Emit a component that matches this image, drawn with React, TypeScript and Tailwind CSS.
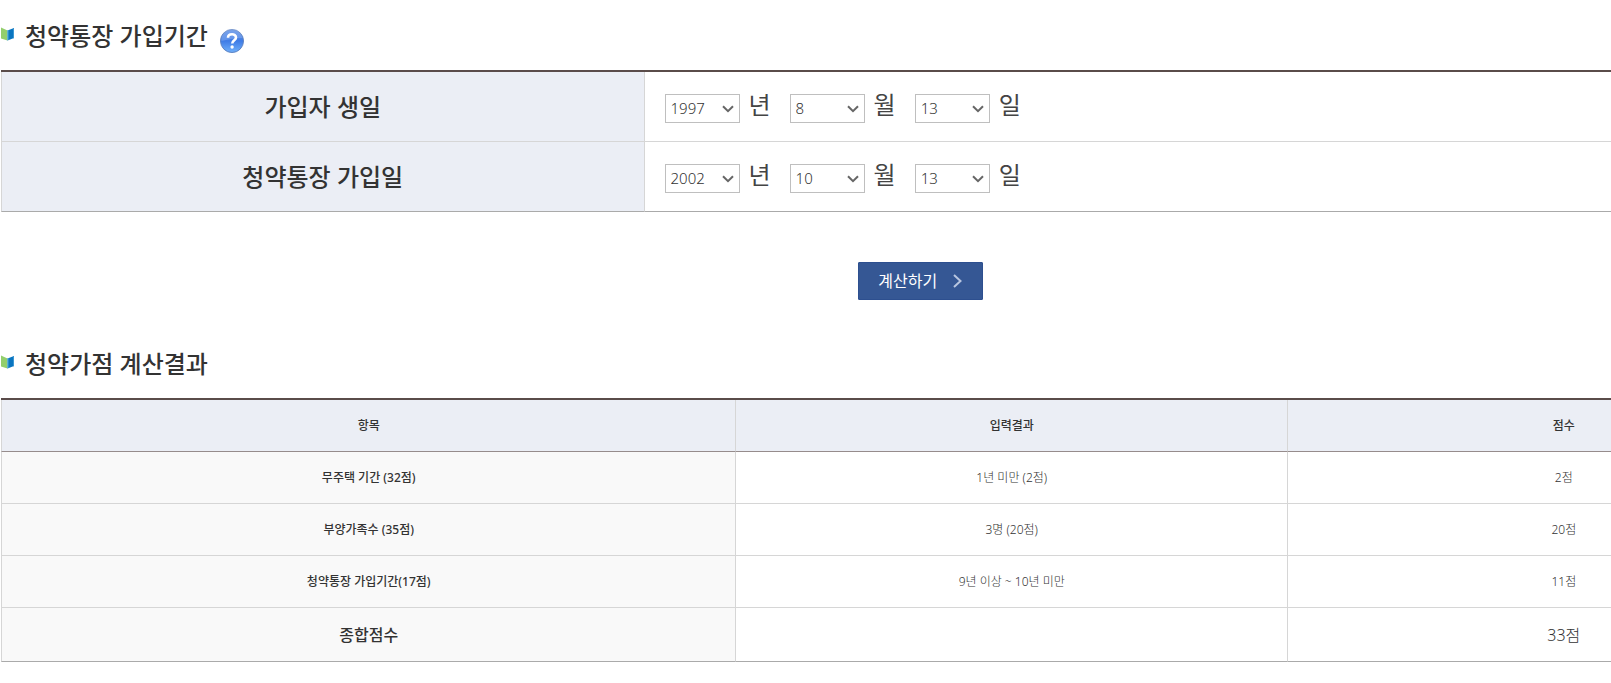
import * as React from "react";

type DateValue = { year: string; month: string; day: string };

const years = Array.from({ length: 75 }, (_, i) => String(1950 + i));
const months = Array.from({ length: 12 }, (_, i) => String(i + 1));
const days = Array.from({ length: 31 }, (_, i) => String(i + 1));

const results = [
  { item: "무주택 기간 (32점)", input: "1년 미만 (2점)", score: "2점" },
  { item: "부양가족수 (35점)", input: "3명 (20점)", score: "20점" },
  { item: "청약통장 가입기간(17점)", input: "9년 이상 ~ 10년 미만", score: "11점" },
];

function BookIcon() {
  return (
    <svg width="13" height="14" viewBox="0 0 13 14" className="mb-1 shrink-0" aria-hidden="true">
      <path d="M0 0.5 L6.5 3.5 V13.5 L0 11.5 Z" fill="#93ce6c" />
      <path d="M6.5 3.5 L13 1 V11 L6.5 13.5 Z" fill="#0a75c0" />
      <path d="M6.2 3.6 L7.4 3.1 V13 L6.2 13.5 Z" fill="#5fb4d8" />
      <path d="M12 1.4 L13 1 V11 L12 11.4 Z" fill="#3c97d2" />
    </svg>
  );
}

function HelpIcon() {
  return (
    <svg width="24" height="24" viewBox="0 0 24 24" aria-hidden="true">
      <defs>
        <linearGradient id="help-bg" x1="0" y1="0" x2="0" y2="1">
          <stop offset="0" stopColor="#5b8ee6" />
          <stop offset="0.5" stopColor="#3f7ce6" />
          <stop offset="1" stopColor="#6fb0fb" />
        </linearGradient>
      </defs>
      <circle cx="12" cy="12" r="11.5" fill="url(#help-bg)" stroke="#5f83c2" />
      <path d="M1.5 12 A10.5 10.5 0 0 1 22.5 9 Q13 9 1.5 12 Z" fill="#fff" opacity="0.18" />
      <path
        d="M8 8.8 C8 4.2 16 4.2 16 8.6 C16 11.4 12.2 11.2 12.2 14.6"
        fill="none"
        stroke="#fff"
        strokeWidth="2.6"
      />
      <circle cx="12.1" cy="18" r="1.7" fill="#fff" />
    </svg>
  );
}

function SectionTitle({ children, help }: { children: React.ReactNode; help?: boolean }) {
  return (
    <div className="flex items-center">
      <BookIcon />
      <h2 className="ml-[11px] text-2xl leading-9 font-medium text-[#333]">{children}</h2>
      {help && (
        <button type="button" aria-label="도움말" className="mt-[10px] ml-3 cursor-pointer">
          <HelpIcon />
        </button>
      )}
    </div>
  );
}

function DateSelect({
  label,
  unit,
  value,
  options,
  onChange,
}: {
  label: string;
  unit: string;
  value: string;
  options: string[];
  onChange: (v: string) => void;
}) {
  return (
    <div className="flex items-center gap-[9px]">
      <div className="relative mt-1">
        <select
          aria-label={label + " " + unit}
          value={value}
          onChange={(e) => onChange(e.target.value)}
          className="block h-[29px] w-[75px] appearance-none border border-[#bfbfbf] bg-white pl-[5px] text-[15px] font-light text-[#333]"
        >
          {options.map((o) => (
            <option key={o} value={o}>
              {o}
            </option>
          ))}
        </select>
        <svg
          width="12"
          height="8"
          viewBox="0 0 12 8"
          className="pointer-events-none absolute top-[11px] right-[6px]"
          aria-hidden="true"
        >
          <path d="M1 1.2 L6 6.2 L11 1.2" fill="none" stroke="#666" strokeWidth="2" />
        </svg>
      </div>
      <span className="pb-1 text-2xl leading-8 font-normal text-[#444]">{unit}</span>
    </div>
  );
}

function DateRow({
  label,
  value,
  onChange,
  last,
}: {
  label: string;
  value: DateValue;
  onChange: (v: DateValue) => void;
  last?: boolean;
}) {
  const line = last ? "border-b-[#aaa]" : "border-b-[#d6d6d6]";
  return (
    <tr className="h-[70px]">
      <th
        scope="row"
        className={"w-[35%] border-x border-b border-x-[#d6d6d6] bg-[#ebeef5] text-2xl font-medium text-[#333] " + line}
      >
        {label}
      </th>
      <td className={"border-b pl-5 " + line}>
        <div className="flex items-center gap-[19px]">
          <DateSelect label={label} unit="년" value={value.year} options={years} onChange={(year) => onChange({ ...value, year })} />
          <DateSelect label={label} unit="월" value={value.month} options={months} onChange={(month) => onChange({ ...value, month })} />
          <DateSelect label={label} unit="일" value={value.day} options={days} onChange={(day) => onChange({ ...value, day })} />
        </div>
      </td>
    </tr>
  );
}

export default function App() {
  const [birth, setBirth] = React.useState<DateValue>({ year: "1997", month: "8", day: "13" });
  const [joined, setJoined] = React.useState<DateValue>({ year: "2002", month: "10", day: "13" });

  return (
    <div className="overflow-hidden bg-white pl-px font-['Noto_Sans','Noto_Sans_CJK_KR',sans-serif]">
      <div className="w-[114.2%]">
        <section className="pt-[18px]">
          <SectionTitle help>청약통장 가입기간</SectionTitle>
          <table className="mt-4 w-full table-fixed border-separate border-spacing-0 border-t-2 border-[#5a4c4a]">
            <tbody>
              <DateRow label="가입자 생일" value={birth} onChange={setBirth} />
              <DateRow label="청약통장 가입일" value={joined} onChange={setJoined} last />
            </tbody>
          </table>
        </section>

        <div className="flex justify-center pt-[50px] pb-[46px]">
          <button
            type="button"
            className="flex h-[38px] w-[125px] cursor-pointer items-center justify-center gap-4 rounded-[1px] border border-[#2d4f8f] bg-[#355794] text-base text-white"
          >
            계산하기
            <svg width="9" height="14" viewBox="0 0 9 14" aria-hidden="true">
              <path d="M1 1 L7.5 7 L1 13" fill="none" stroke="#b8c6e0" strokeWidth="2" />
            </svg>
          </button>
        </div>

        <section>
          <SectionTitle>청약가점 계산결과</SectionTitle>
          <table className="mt-4 w-full table-fixed border-separate border-spacing-0 border-t-2 border-[#5a4c4a] text-center text-xs">
            <thead>
              <tr className="h-[52px] bg-[#ebeef5] text-[#333]">
                <th scope="col" className="w-[40%] border-x border-b border-x-[#d6d6d6] border-b-[#968c8c] font-medium">항목</th>
                <th scope="col" className="w-[30%] border-r border-b border-r-[#d6d6d6] border-b-[#968c8c] font-medium">입력결과</th>
                <th scope="col" className="w-[30%] border-b border-b-[#968c8c] font-medium">점수</th>
              </tr>
            </thead>
            <tbody>
              {results.map((r) => (
                <tr key={r.item} className="h-[52px] text-[#333]">
                  <th scope="row" className="border-x border-b border-[#d6d6d6] bg-[#f9f9f9] font-medium">{r.item}</th>
                  <td className="border-r border-b border-[#d6d6d6] font-light">{r.input}</td>
                  <td className="border-b border-[#d6d6d6] font-light">{r.score}</td>
                </tr>
              ))}
              <tr className="h-[54px] text-base text-[#333]">
                <th scope="row" className="border-x border-b border-x-[#d6d6d6] border-b-[#aaa] bg-[#f9f9f9] font-medium">종합점수</th>
                <td className="border-r border-b border-r-[#d6d6d6] border-b-[#aaa]"></td>
                <td className="border-b border-b-[#aaa] font-light">33점</td>
              </tr>
            </tbody>
          </table>
        </section>
      </div>
    </div>
  );
}
